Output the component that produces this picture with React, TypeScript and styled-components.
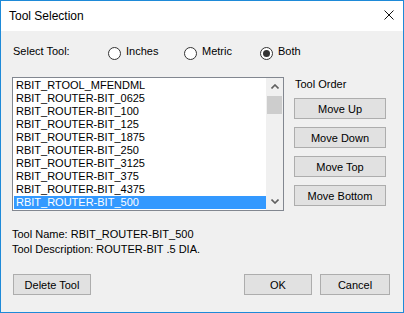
import React from "react";
import styled, { createGlobalStyle } from "styled-components";

const tools = [
	"RBIT_RTOOL_MFENDML",
	"RBIT_ROUTER-BIT_0625",
	"RBIT_ROUTER-BIT_100",
	"RBIT_ROUTER-BIT_125",
	"RBIT_ROUTER-BIT_1875",
	"RBIT_ROUTER-BIT_250",
	"RBIT_ROUTER-BIT_3125",
	"RBIT_ROUTER-BIT_375",
	"RBIT_ROUTER-BIT_4375",
	"RBIT_ROUTER-BIT_500",
];

const units = [
	{ label: "Inches", checked: false },
	{ label: "Metric", checked: false },
	{ label: "Both", checked: true },
];

const orderButtons = ["Move Up", "Move Down", "Move Top", "Move Bottom"];

export default function App() {
	return (
		<>
			<GlobalStyle />
			<Window>
				<TitleBar>
					<Title>Tool Selection</Title>
					<CloseIcon width="10" height="10" viewBox="0 0 10 10">
						<path d="M0.5 0.5 L9.5 9.5 M9.5 0.5 L0.5 9.5" stroke="#111" strokeWidth="1" />
					</CloseIcon>
				</TitleBar>
				<Client>
					<SelectRow>
						<SelectLabel>Select Tool:</SelectLabel>
						{units.map((u) => (
							<RadioOption key={u.label}>
								<RadioCircle>{u.checked && <RadioDot />}</RadioCircle>
								<span>{u.label}</span>
							</RadioOption>
						))}
					</SelectRow>

					<MainRow>
						<ListBox>
							<Items>
								{tools.map((t, i) => (
									<Item key={t} $selected={i === tools.length - 1}>
										{t}
									</Item>
								))}
							</Items>
							<ScrollBar>
								<ArrowBox>
									<svg width="8" height="5" viewBox="0 0 8 5">
										<polyline points="0.5,4.5 4,1 7.5,4.5" fill="none" stroke="#606060" strokeWidth="1.6" />
									</svg>
								</ArrowBox>
								<Thumb />
								<Track />
								<ArrowBox>
									<svg width="8" height="5" viewBox="0 0 8 5">
										<polyline points="0.5,0.5 4,4 7.5,0.5" fill="none" stroke="#606060" strokeWidth="1.6" />
									</svg>
								</ArrowBox>
							</ScrollBar>
						</ListBox>
						<OrderColumn>
							<OrderLabel>Tool Order</OrderLabel>
							{orderButtons.map((b) => (
								<Button key={b} $width={92}>
									{b}
								</Button>
							))}
						</OrderColumn>
					</MainRow>

					<Info>
						<InfoLine>Tool Name: RBIT_ROUTER-BIT_500</InfoLine>
						<InfoLine>Tool Description: ROUTER-BIT .5 DIA.</InfoLine>
					</Info>

					<Footer>
						<DeleteButton $width={78}>Delete Tool</DeleteButton>
						<FooterRight>
							<Button $width={68}>OK</Button>
							<Button $width={70}>Cancel</Button>
						</FooterRight>
					</Footer>
				</Client>
			</Window>
		</>
	);
}

const GlobalStyle = createGlobalStyle`
	* {
		box-sizing: border-box;
	}

	body {
		margin: 0;
		background: #ffffff;
		font-family: "Liberation Sans", Arial, sans-serif;
		font-size: 11px;
		color: #000000;
	}
`;

const Window = styled.div`
	width: 404px;
	height: 313px;
	border: 1px solid #1e8ad8;
	display: flex;
	flex-direction: column;
	background: #f0f0f0;
`;

const TitleBar = styled.div`
	height: 30px;
	flex-shrink: 0;
	background: #ffffff;
	display: flex;
	align-items: center;
	justify-content: space-between;
	padding: 0 9px 0 8px;
`;

const Title = styled.span`
	font-size: 12px;
	color: #000000;
`;

const CloseIcon = styled.svg`
	margin-bottom: 2px;
`;

const Client = styled.div`
	flex: 1;
	display: flex;
	flex-direction: column;
	padding: 13px 13px 0 11px;
	line-height: 15px;
`;

const SelectRow = styled.div`
	display: flex;
	align-items: flex-start;
	height: 17px;
`;

const SelectLabel = styled.span`
	width: 95px;
	margin-left: 1px;
`;

const RadioOption = styled.label`
	width: 76px;
	display: flex;
	align-items: flex-start;
	gap: 5px;
`;

const RadioCircle = styled.span`
	width: 13px;
	height: 13px;
	margin-top: 3px;
	border: 1px solid #333333;
	border-radius: 50%;
	background: #ffffff;
	display: flex;
	align-items: center;
	justify-content: center;
`;

const RadioDot = styled.span`
	width: 7px;
	height: 7px;
	border-radius: 50%;
	background: #333333;
`;

const MainRow = styled.div`
	display: flex;
	margin-top: 16px;
	gap: 10px;
`;

const ListBox = styled.div`
	width: 272px;
	height: 134px;
	border: 1px solid #828790;
	background: #ffffff;
	display: flex;
`;

const Items = styled.div`
	flex: 1;
	padding: 1px 0 0 1px;
	display: flex;
	flex-direction: column;
`;

const Item = styled.div<{ $selected?: boolean }>`
	height: 13px;
	line-height: 13px;
	padding-left: 2px;
	white-space: nowrap;
	background: ${(p) => (p.$selected ? "#3399ff" : "transparent")};
	color: ${(p) => (p.$selected ? "#ffffff" : "#000000")};
`;

const ScrollBar = styled.div`
	width: 17px;
	background: #f0f0f0;
	display: flex;
	flex-direction: column;
	align-items: center;
`;

const ArrowBox = styled.div`
	width: 17px;
	height: 17px;
	display: flex;
	align-items: center;
	justify-content: center;
`;

const Thumb = styled.div`
	width: 15px;
	height: 18px;
	margin-top: 1px;
	background: #cdcdcd;
`;

const Track = styled.div`
	flex: 1;
`;

const OrderColumn = styled.div`
	display: flex;
	flex-direction: column;
	gap: 8px;
	padding-top: 1px;
`;

const OrderLabel = styled.div`
	line-height: 13px;
	margin-left: 1px;
	margin-bottom: -1px;
`;

const Button = styled.button<{ $width: number }>`
	width: ${(p) => p.$width}px;
	height: 21px;
	padding: 0;
	border: 1px solid #adadad;
	background: #e1e1e1;
	font-family: "Liberation Sans", Arial, sans-serif;
	font-size: 11px;
	color: #000000;
`;

const DeleteButton = styled(Button)`
	margin-left: 1px;
`;

const Info = styled.div`
	margin-top: 16px;
	display: flex;
	flex-direction: column;
`;

const InfoLine = styled.div`
	line-height: 15px;
`;

const Footer = styled.div`
	margin-top: 17px;
	display: flex;
	justify-content: space-between;
`;

const FooterRight = styled.div`
	display: flex;
	gap: 8px;
`;
